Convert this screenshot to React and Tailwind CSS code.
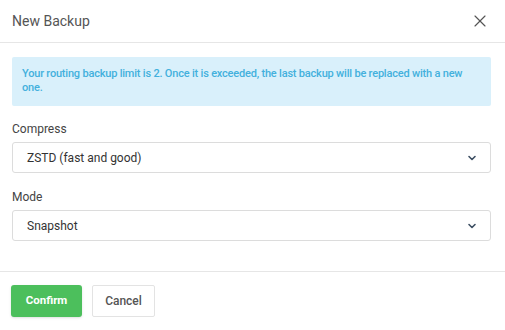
import { X, ChevronDown } from 'lucide-react';

function SelectBox({ value }) {
  return (
    <div className="flex items-center justify-between h-[31px] pl-[14px] pr-[12px] border border-[#dcdcdc] rounded-[3px] bg-white">
      <span className="text-[12px] text-[#333]">{value}</span>
      <ChevronDown size={12} strokeWidth={3.2} className="text-[#3d4f63]" />
    </div>
  );
}

export default function App() {
  return (
    <div className="w-[505px] h-[330px] bg-white flex flex-col" style={{ fontFamily: 'Roboto, "Liberation Sans", sans-serif' }}>
      {/* Header */}
      <div className="flex items-center justify-between h-[43px] px-[12px] border-b border-[#e6e6e6]">
        <span className="text-[14px] text-[#555]">New Backup</span>
        <X size={20} strokeWidth={1.4} className="text-[#555] mr-[3px]" />
      </div>

      {/* Body */}
      <div className="h-[228px] pl-[12px] pr-[14px] pt-[14px]">
        <div className="bg-[#d9f0fb] pl-[10px] pr-[10px] pt-[10px] pb-[11px] rounded-[2px]">
          <p className="text-[11px] leading-[14px] tracking-[-0.2px] font-medium text-[#43b0dd]">
            Your routing backup limit is 2. Once it is exceeded, the last backup will be replaced with a new one.
          </p>
        </div>

        <div className="mt-[15px] mb-[5px] text-[12px] leading-[16px] text-[#444]">Compress</div>
        <SelectBox value="ZSTD (fast and good)" />

        <div className="mt-[16px] mb-[5px] text-[12px] leading-[16px] text-[#444]">Mode</div>
        <SelectBox value="Snapshot" />
      </div>

      {/* Footer */}
      <div className="flex items-center gap-[10px] flex-1 px-[11px] border-t border-[#e6e6e6]">
        <button className="h-[32px] w-[71px] rounded-[3px] bg-[#4cbf5c] text-white text-[11.5px] font-bold shadow-sm">
          Confirm
        </button>
        <button className="h-[32px] w-[63px] rounded-[2px] bg-white border border-[#e3e3e3] text-[#555] text-[12px] font-medium">
          Cancel
        </button>
      </div>
    </div>
  );
}
